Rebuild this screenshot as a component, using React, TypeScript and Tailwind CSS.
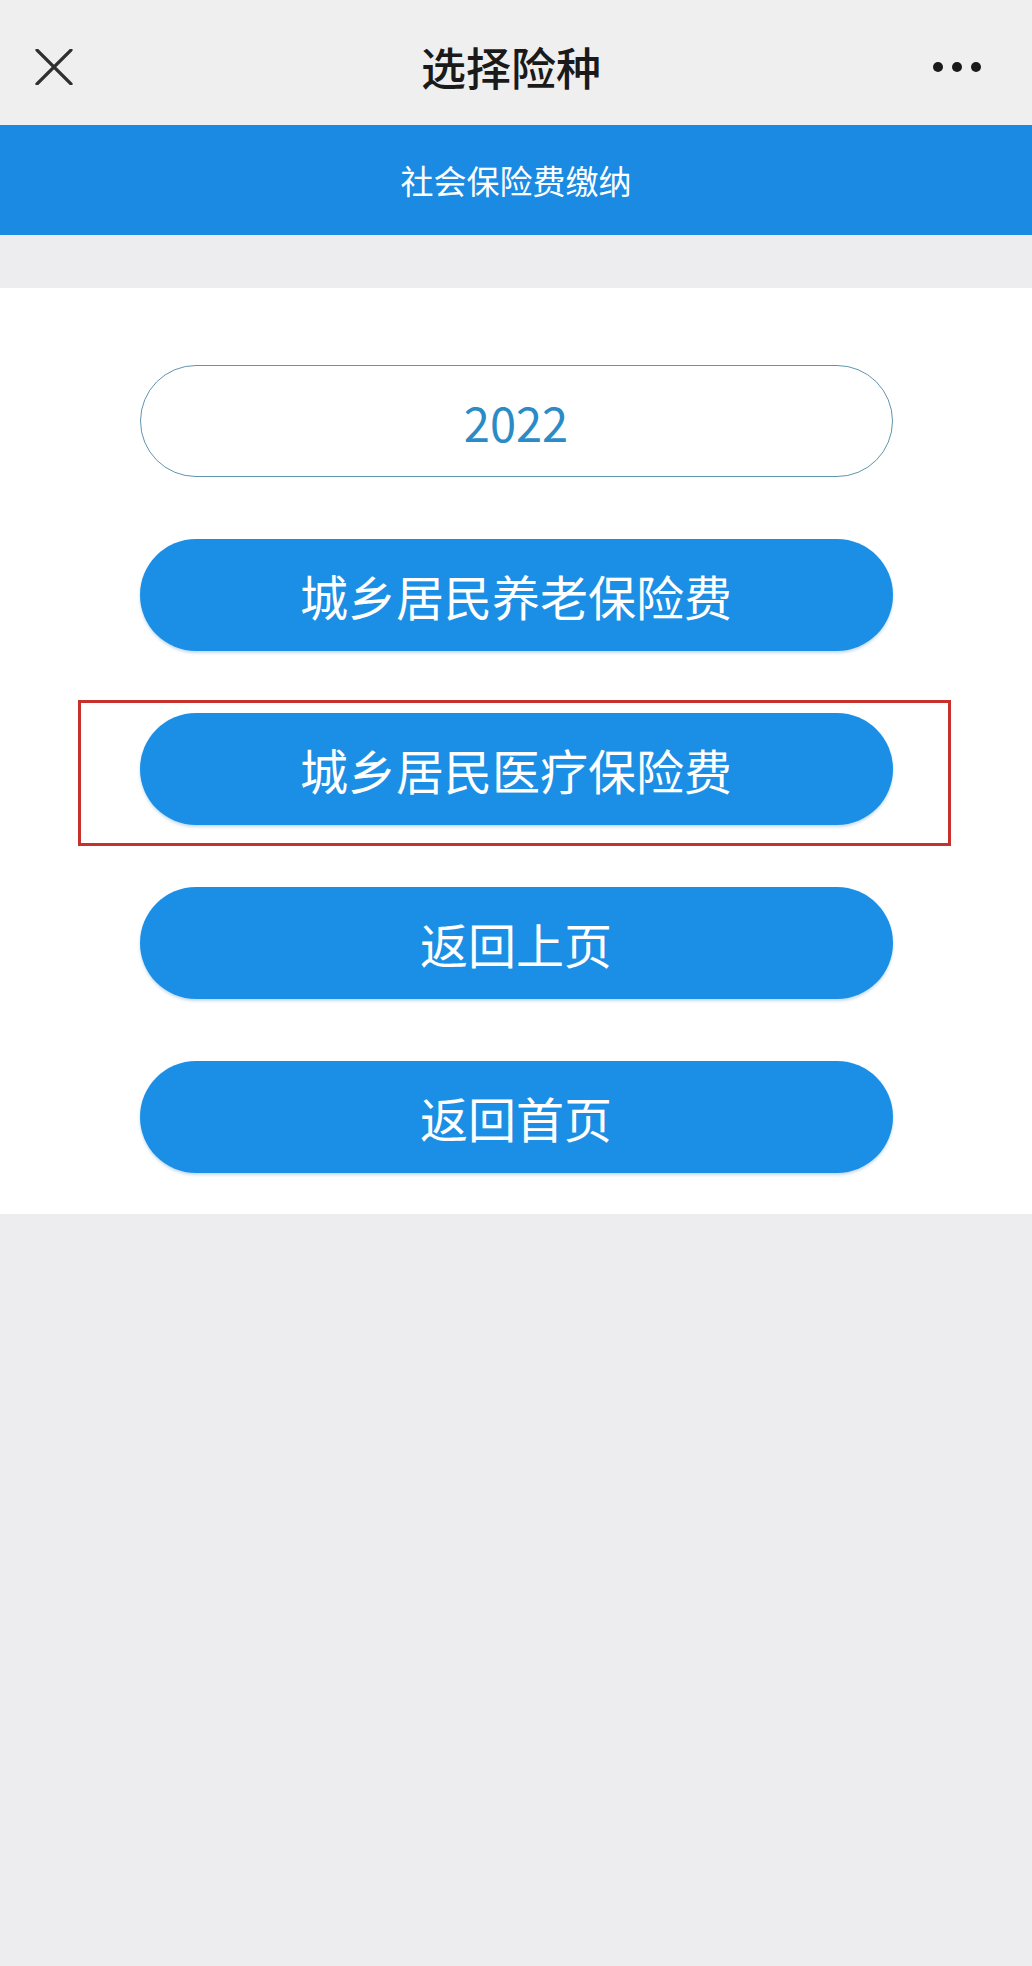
import React from "react";

const font = { fontFamily: '"Noto Sans CJK SC", "Noto Sans", sans-serif' };

function Pill({ children }: { children: React.ReactNode }) {
  return (
    <div className="flex h-[112px] w-[753px] items-center justify-center rounded-full bg-[#1b8fe5] text-[48px] leading-none text-white shadow-[0_2px_3px_rgba(20,110,190,0.25)]">
      {children}
    </div>
  );
}

export default function App() {
  return (
    <div className="min-h-[1966px] w-[1032px] bg-[#ededef]" style={font}>
      {/* Top nav */}
      <div className="relative flex h-[125px] items-center justify-center bg-[#efefef]">
        <svg className="absolute left-[35px] top-[49px]" width="38" height="36" viewBox="0 0 38 36">
          <path d="M2 1 L36 35 M36 1 L2 35" stroke="#2f2f2f" strokeWidth="3.2" strokeLinecap="round" />
        </svg>
        <div className="mr-[10px] mt-[8px] text-[45px] font-medium leading-none text-[#1a1a1a]">选择险种</div>
        <div className="absolute left-[933px] top-[62px] flex gap-[9px]">
          <span className="block h-[10px] w-[10px] rounded-full bg-[#1a1a1a]" />
          <span className="block h-[10px] w-[10px] rounded-full bg-[#1a1a1a]" />
          <span className="block h-[10px] w-[10px] rounded-full bg-[#1a1a1a]" />
        </div>
      </div>

      {/* Blue band */}
      <div className="flex h-[110px] items-center justify-center bg-[#1a8ae3]">
        <div className="text-[33px] leading-none text-white">社会保险费缴纳</div>
      </div>

      <div className="h-[53px]" />

      {/* White card */}
      <div className="flex flex-col items-center gap-[62px] bg-white pb-[41px] pt-[77px]">
        <div className="flex h-[112px] w-[753px] items-center justify-center rounded-full border-[1.5px] border-[#5f95ae] bg-white text-[47px] leading-none text-[#2b8bc6]">
          2022
        </div>
        <Pill>城乡居民养老保险费</Pill>
        <div className="relative">
          <Pill>城乡居民医疗保险费</Pill>
          <div className="pointer-events-none absolute left-[-62px] right-[-58px] top-[-13px] bottom-[-21px] border-[3px] border-[#c8302b]" />
        </div>
        <Pill>返回上页</Pill>
        <Pill>返回首页</Pill>
      </div>
    </div>
  );
}
